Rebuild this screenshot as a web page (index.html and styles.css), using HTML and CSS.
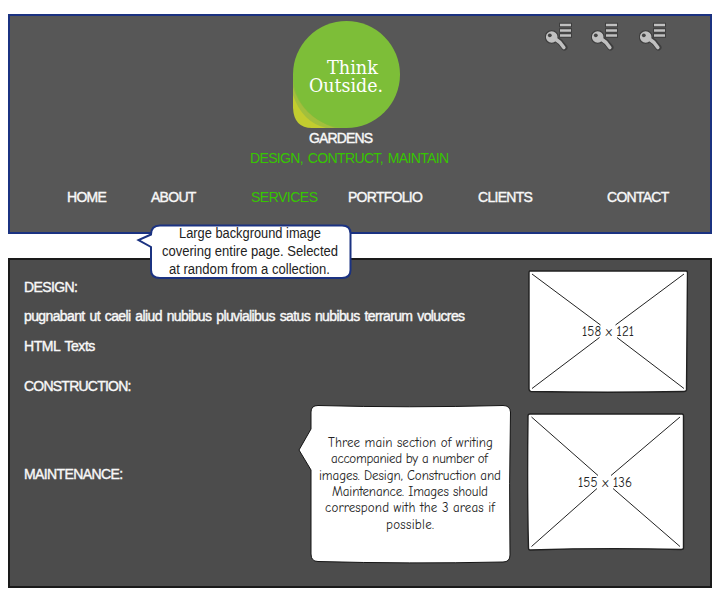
FILE: index.html
```html
<!DOCTYPE html>
<html lang="en">
<head>
<meta charset="utf-8">
<title>Think Outside Gardens</title>
<link rel="stylesheet" href="styles.css">
</head>
<body>
<svg class="defs" width="0" height="0" aria-hidden="true">
  <symbol id="key" viewBox="0 0 30 30">
    <g stroke="#3e3e3e" stroke-linecap="butt">
      <path d="M14 4h13M14 9.500h13M14 14.500h13" stroke-width="4.400"/>
      <path d="M10 17.500l5 3.500 4.500 5.500" stroke-width="6" fill="none" stroke-linecap="round"/>
      <circle cx="6.700" cy="16" r="6.400" fill="#c0c0c0" stroke-width="1.200"/>
    </g>
    <path d="M15 4h11M15 9.500h11M15 14.500h11" stroke="#c0c0c0" stroke-width="2.400"/>
    <path d="M9 17l6 4.500 3.800 5" stroke="#c0c0c0" stroke-width="3.600" fill="none" stroke-linecap="round" stroke-linejoin="round"/>
    <circle cx="4.800" cy="14.300" r="1.900" fill="#444"/>
  </symbol>
</svg>
<main class="page">
  <header class="header">
    <div class="keys">
      <svg><use href="#key"/></svg>
      <svg><use href="#key"/></svg>
      <svg class="last"><use href="#key"/></svg>
    </div>
    <div class="brand">
      <svg class="logo" width="108" height="108" viewBox="0 0 108 108">
        <path d="M0 54V87Q1 107 19 107H54Z" fill="#c2cc2f"/>
        <path d="M0 54V74Q9 101 33 107H54Z" fill="#a2bf3c"/>
        <path d="M0 54V66Q9 96 42 107H54Z" fill="#8dba3b"/>
        <circle cx="53.500" cy="53.500" r="53.500" fill="#7dbe38"/>
        <g class="logo-text">
          <text x="34" y="53" textLength="51" lengthAdjust="spacingAndGlyphs">Think</text>
          <text x="16" y="70.500" textLength="74" lengthAdjust="spacingAndGlyphs">Outside.</text>
        </g>
      </svg>
      <div class="name">GARDENS</div>
      <div class="tagline">DESIGN, CONTRUCT, MAINTAIN</div>
    </div>
    <nav class="nav">
      <a>HOME</a><a>ABOUT</a><a class="active">SERVICES</a><a>PORTFOLIO</a><a>CLIENTS</a><a>CONTACT</a>
    </nav>
  </header>
  <section class="content">
    <div class="copy">
      <h2>DESIGN:</h2>
      <p class="latin">pugnabant ut caeli aliud nubibus pluvialibus satus nubibus terrarum volucres</p>
      <p class="html">HTML Texts</p>
      <h2 class="construction">CONSTRUCTION:</h2>
      <h2 class="maintenance">MAINTENANCE:</h2>
    </div>
    <div class="images">
      <svg class="first" width="160" height="123" viewBox="0 0 160 123">
        <path d="M2 1H158Q159.500 1 159.500 3Q159 65 158.500 120Q158 121.500 156 121.500Q80 123 3 121.500Q1 121 1 119V3Q1 1 2 1Z" class="frame"/>
        <path d="M4 4L72.500 55M156 4L87.500 55M4 118.500L71.500 67.500M156 118.500L89 67.500" class="cross"/>
        <text x="54" y="66" textLength="52">158 x 121</text>
      </svg>
      <svg width="158" height="138" viewBox="0 0 158 138">
        <path d="M3 1H155Q156.500 1 156.500 3V135Q156.500 136.500 154 136.500Q80 134.500 3 137Q1.500 137 1.500 135Q0 80 1 3Q1 1 3 1Z" class="frame"/>
        <path d="M4.500 4L71 62.500M153 4L84 62.500M4.500 133.500L70 75.500M153 133.500L86 75.500" class="cross"/>
        <text x="51" y="74" textLength="54">155 x 136</text>
      </svg>
    </div>
  </section>
  <svg class="note-background" width="216" height="58" viewBox="0 0 216 58">
    <path d="M24 2.500H206Q214.500 2.500 214.500 10.500V47Q214.500 55 206 55H24Q15 55 15 47V24L2.500 17L15 11.500Q15 2.500 24 2.500Z"/>
    <g>
      <text x="43" y="15" textLength="142" lengthAdjust="spacingAndGlyphs">Large background image</text>
      <text x="26" y="33" textLength="176" lengthAdjust="spacingAndGlyphs">covering entire page. Selected</text>
      <text x="33" y="51" textLength="161" lengthAdjust="spacingAndGlyphs">at random from a collection.</text>
    </g>
  </svg>
  <svg class="note-sections" width="214" height="160" viewBox="0 0 214 160">
    <path d="M20 1.500Q110 4 205 1.500Q212 1.500 212.500 8Q211 80 212 151Q212 158 205 158Q110 160 20 157.500Q13 157.500 13 150V66L1 46L13 25V8Q13 1.500 20 1.500Z"/>
    <g>
      <text x="30" y="43" textLength="165">Three main section of writing</text>
      <text x="33" y="59" textLength="157">accompanied by a number of</text>
      <text x="21" y="76" textLength="182">images. Design, Construction and</text>
      <text x="34" y="92" textLength="156">Maintenance. Images should</text>
      <text x="27" y="108" textLength="170">correspond with the 3 areas if</text>
      <text x="88" y="125" textLength="48">possible.</text>
    </g>
  </svg>
</main>
</body>
</html>
```
FILE: styles.css
```css
* { box-sizing: border-box; }
body {
  margin: 0;
  background: #fff;
  color: #f8f8f8;
  font: 14px/18px "Liberation Sans", Arial, sans-serif;
}
svg { display: block; }
.defs { position: absolute; }
.page {
  position: relative;
  width: 724px;
  height: 603px;
  padding: 14px 12px 0 8px;
}
.header {
  position: relative;
  height: 220px;
  background: #575757;
  border: 2px solid #1b3281;
  -webkit-text-stroke: .4px currentColor;
}
.keys {
  position: absolute;
  top: 5px;
  right: 41px;
  display: flex;
  gap: 16px;
}
.keys svg { width: 30px; height: 30px; }
.keys .last { margin-left: 2px; }
.brand { padding-top: 5px; }
.logo { margin-left: 283px; }
.logo-text {
  fill: #fff;
  -webkit-text-stroke: 0;
  font: 18.5px "DejaVu Serif", serif;
}
.name {
  margin-left: 299px;
  letter-spacing: -.85px;
}
.tagline {
  margin: 2px 0 0 240px;
  color: #36c600;
  letter-spacing: -.64px;
  word-spacing: 1.5px;
  white-space: nowrap;
  -webkit-text-stroke: 0;
}
.nav {
  display: grid;
  grid-template-columns: 84px 100px 97px 130px 129px 80px;
  margin: 21px 0 0 57px;
  letter-spacing: -.72px;
}
.nav .active { color: #36c600; letter-spacing: -.5px; -webkit-text-stroke: 0; }
.content {
  display: flex;
  justify-content: space-between;
  height: 330px;
  margin-top: 24px;
  padding: 10px 21px 0 14px;
  background: #4c4c4c;
  border: 2px solid #1a1a1a;
}
.copy { padding-top: 8px; -webkit-text-stroke: .4px currentColor; }
h2, p { margin: 0; font-size: 14px; font-weight: 400; letter-spacing: -.6px; }
.latin { margin-top: 11px; white-space: nowrap; letter-spacing: -.62px; word-spacing: 1.6px; }
.html { margin-top: 12px; letter-spacing: -.45px; word-spacing: 1.5px; }
.construction { margin-top: 22px; letter-spacing: -.77px; }
.maintenance { margin-top: 70px; }
.images { width: 162px; }
.images .first { margin: 0 0 20px 1px; }
.frame { fill: #fff; stroke: #202020; stroke-width: 1.4; }
.cross { fill: none; stroke: #222; }
.images text, .note-sections text {
  fill: #222;
  font: 13px "Comic Neue", "Comic Sans MS", Lato, sans-serif;
}
.note-background, .note-sections { position: absolute; }
.note-background { left: 136px; top: 223px; }
.note-background path { fill: #fff; stroke: #1b3281; stroke-width: 2; }
.note-background text { fill: #222; font: 14px "Liberation Sans", Arial, sans-serif; }
.note-sections { left: 298px; top: 404px; }
.note-sections path { fill: #fff; stroke: #151515; }
```
